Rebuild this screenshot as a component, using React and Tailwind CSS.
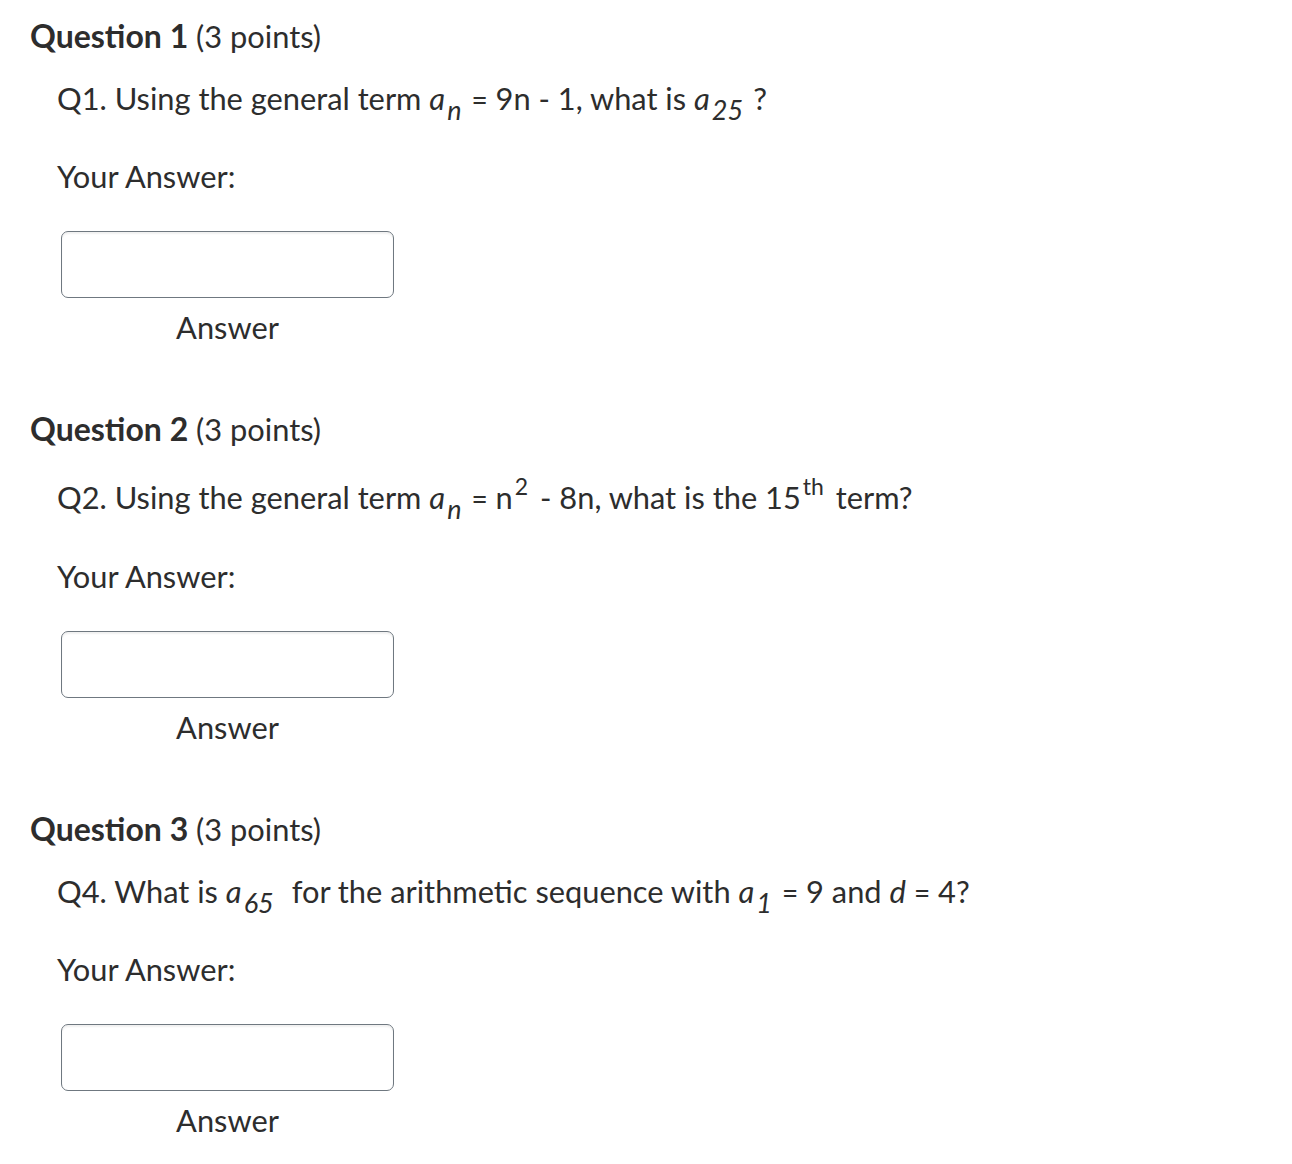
import React from "react";

const font = { fontFamily: "Lato, 'Noto Sans', sans-serif" };

function A({ children = "a", extra = "" }) {
  return <span className={`italic text-[31px] ${extra}`}>{children}</span>;
}
function Sub({ children }) {
  return <span className="text-[27px] italic align-[-10px] leading-none mr-[10px] ml-[2px]">{children}</span>;
}
function Sup({ children }) {
  return <span className="text-[23px] align-[14px] leading-none ml-[2px] mr-[4px]">{children}</span>;
}
function Eq() {
  return <span className="text-[28px] leading-none">=</span>;
}

function Question({ num, qMt, aMt, children }) {
  return (
    <div>
      <div className="h-[40px] leading-[40px] text-[30.8px] text-[#2d2d2d] whitespace-nowrap">
        <span className="font-bold text-[32px]">Question {num}</span> (3 points)
      </div>
      <div className={`${qMt} pl-[27px] h-[40px] leading-[40px] text-[30.8px] text-[#2d2d2d] whitespace-nowrap`}>
        {children}
      </div>
      <div className={`${aMt} pl-[27px] h-[40px] leading-[40px] text-[30.8px] text-[#2d2d2d]`}>Your Answer:</div>
      <div className="mt-[34px] ml-[31px] w-[333px] flex flex-col items-center">
        <div className="w-[333px] h-[67px] rounded-[7px] border border-[#6f7880] bg-white shadow-[inset_0_2px_2px_rgba(0,0,0,0.06)]" />
        <div className="mt-[10px] h-[40px] leading-[40px] text-[30.8px] text-[#2d2d2d]">Answer</div>
      </div>
    </div>
  );
}

export default function App() {
  return (
    <div className="bg-white w-[1292px] h-[1164px] pl-[30px] pt-[16px]" style={font}>
      <Question num={1} qMt="mt-[22px]" aMt="mt-[39px]">
        Q1. Using the general term <A />
        <Sub>n</Sub>
        <Eq /> 9n - 1, what is <A />
        <Sub>25</Sub>?
      </Question>
      <div className="mt-[61px]">
        <Question num={2} qMt="mt-[26px]" aMt="mt-[42px]">
          Q2. Using the general term <A />
          <Sub>n</Sub>
          <Eq /> n<Sup>2</Sup> - 8n, what is the 15<Sup>th</Sup> term?
        </Question>
      </div>
      <div className="mt-[61px]">
        <Question num={3} qMt="mt-[22px]" aMt="mt-[39px]">
          Q4. What is <A />
          <Sub>65</Sub> for the arithmetic sequence with <A />
          <Sub>1</Sub>
          <Eq /> 9 and <A extra="mr-[8px]">d</A>
          <Eq /> 4?
        </Question>
      </div>
    </div>
  );
}
